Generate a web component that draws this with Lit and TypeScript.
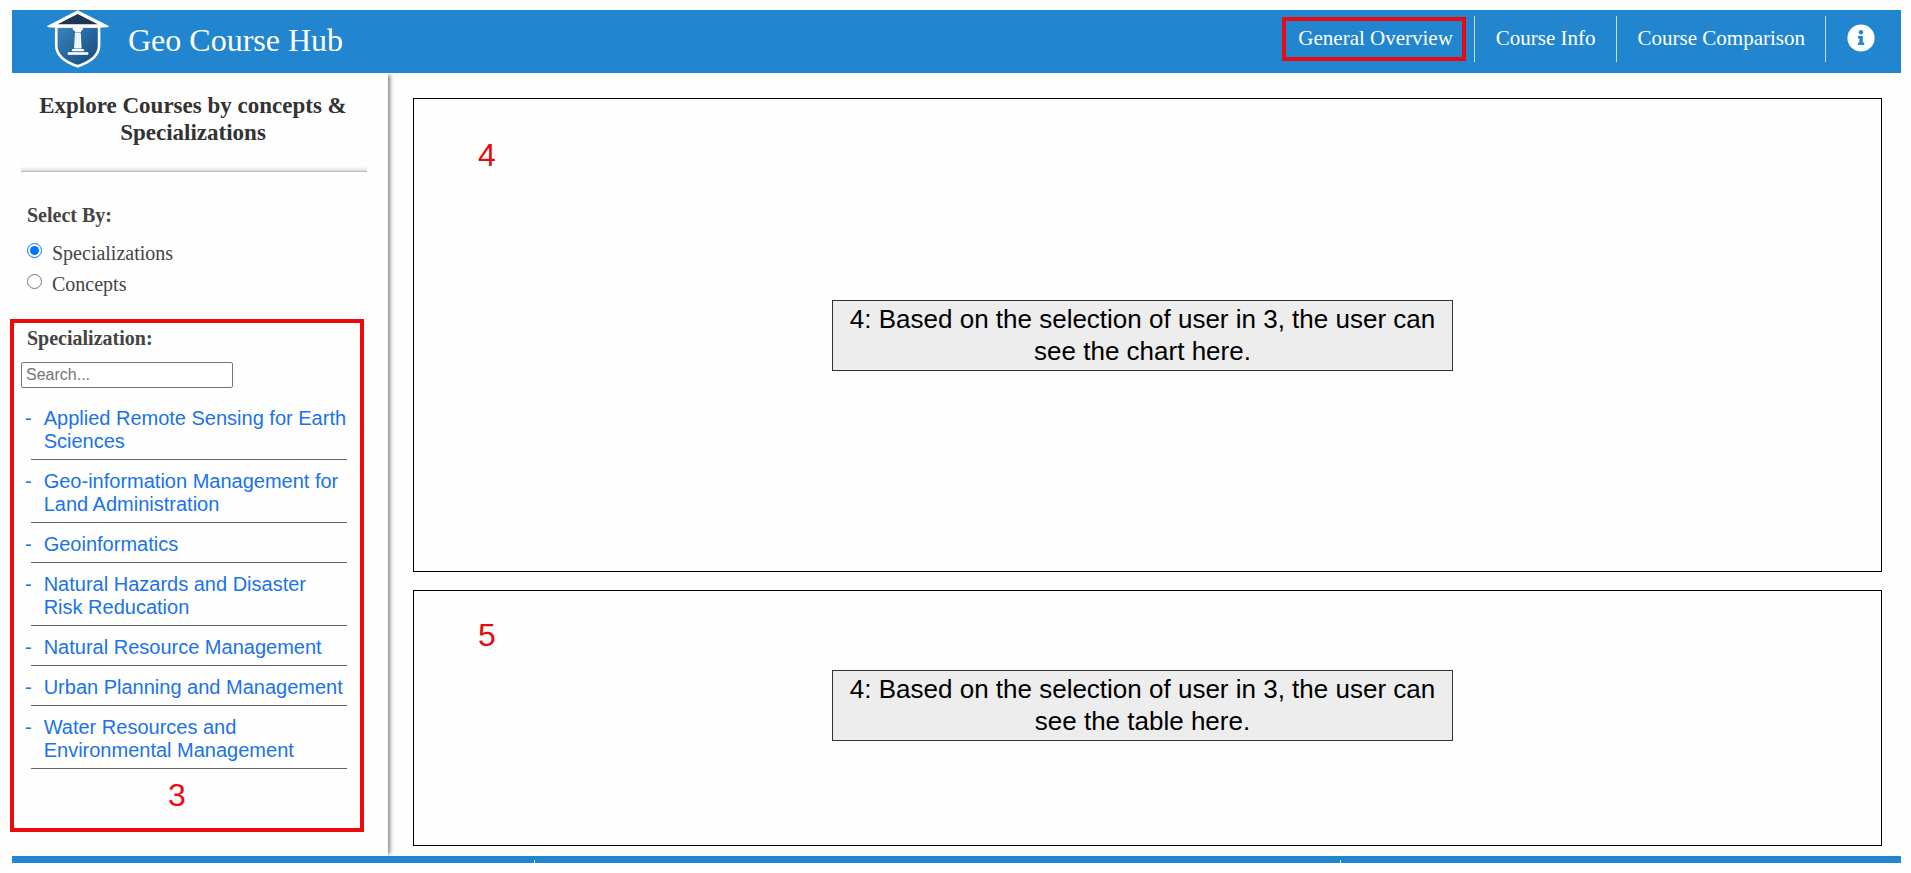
import { LitElement, html, css } from "lit";
import { customElement, state } from "lit/decorators.js";

const SPECIALIZATIONS = [
  "Applied Remote Sensing for Earth Sciences",
  "Geo-information Management for Land Administration",
  "Geoinformatics",
  "Natural Hazards and Disaster Risk Reducation",
  "Natural Resource Management",
  "Urban Planning and Management",
  "Water Resources and Environmental Management",
];

@customElement("hub-header")
export class HubHeader extends LitElement {
  static styles = css`
    :host {
      display: flex;
      align-items: center;
      justify-content: space-between;
      box-sizing: border-box;
      height: 63px;
      padding-bottom: 5px;
      background: #2185d0;
      color: #fff;
      font-family: "Liberation Serif", "Times New Roman", serif;
    }
    .brand {
      display: flex;
      align-items: center;
      gap: 18px;
      padding-left: 34px;
    }
    .logo {
      display: block;
      width: 64px;
      height: 58px;
    }
    .name {
      margin: 0;
      padding-top: 1px;
      font-size: 32px;
      line-height: 40px;
      font-weight: 400;
    }
    .nav {
      display: flex;
      align-items: center;
      padding-right: 6px;
    }
    .item {
      display: flex;
      align-items: center;
      box-sizing: border-box;
      height: 46px;
      padding: 0 20px 2px 21px;
      border-left: 1px solid #c5dff2;
      font-size: 21px;
      line-height: 24px;
    }
    .item.first {
      height: 44px;
      margin-right: 8px;
      padding: 0 9px 2px 12px;
      border: 4px solid #e60a12;
    }
    .link {
      color: #fff;
      text-decoration: none;
    }
    .info {
      display: block;
      width: 28px;
      height: 28px;
      padding: 0;
      border: 0;
      background: none;
      cursor: pointer;
    }
    .glyph {
      display: block;
      width: 28px;
      height: 28px;
    }
  `;

  render() {
    return html`
      <div class="brand">
        <svg class="logo" viewBox="28 30 192 176" aria-hidden="true">
          <defs>
            <linearGradient id="shield" x1="0" y1="0" x2="1" y2="1">
              <stop offset="0" stop-color="#3f86bd" />
              <stop offset="0.5" stop-color="#24659c" />
              <stop offset="1" stop-color="#174a78" />
            </linearGradient>
          </defs>
          <path
            d="M58 80 V138 C58 170 84 188 123 201 C162 188 188 170 188 138 V80 Z"
            fill="url(#shield)"
            stroke="#fff"
            stroke-width="8"
          />
          <path d="M123 31 L219 79 Q214 83 206 83 H42 Q34 83 29 79 Z" fill="#fff" />
          <path d="M123 42 L184 73 H62 Z" fill="#1d3557" />
          <g fill="#fff">
            <path d="M108 84 H139 Q140 92 133 94 V97 H115 V94 Q107 92 108 84 Z" />
            <path d="M115 98 H132 L135 147 H112 Z" />
            <rect x="105" y="148" width="38" height="7" rx="3" />
            <rect x="93" y="158" width="62" height="8" />
          </g>
          <path d="M120 99 L118 146 M127 99 V146" stroke="#b9d0e3" stroke-width="1.5" fill="none" />
        </svg>
        <h1 class="name">Geo Course Hub</h1>
      </div>
      <nav class="nav">
        <div class="item first"><a class="link" href="#overview">General Overview</a></div>
        <div class="item"><a class="link" href="#info">Course Info</a></div>
        <div class="item"><a class="link" href="#comparison">Course Comparison</a></div>
        <div class="item">
          <button class="info" type="button" aria-label="About">
            <svg class="glyph" viewBox="0 0 28 28" aria-hidden="true">
              <circle cx="14" cy="14" r="13.6" fill="#fff" />
              <circle cx="14" cy="8.3" r="2.2" fill="#2185d0" />
              <path d="M11 12 H15.8 V18.6 H17.2 V21 H11 V18.6 H12.4 V14.4 H11 Z" fill="#2185d0" />
            </svg>
          </button>
        </div>
      </nav>
    `;
  }
}

@customElement("hub-sidebar")
export class HubSidebar extends LitElement {
  static styles = css`
    :host {
      display: block;
      box-sizing: border-box;
      width: 376px;
      padding: 12px 0 23px;
      background: #fefefe;
      box-shadow: 4px 0 4px -2px rgba(0, 0, 0, 0.5);
      color: #444;
      font-family: "Liberation Serif", "Times New Roman", serif;
      font-size: 20px;
      line-height: 24px;
    }
    .title {
      box-sizing: border-box;
      margin: 0 21px 0 9px;
      padding: 7px 14px 25px 12px;
      border-bottom: 1px solid #bbb;
      box-shadow: inset 0 -4px 4px -3px rgba(0, 0, 0, 0.2);
      color: #333;
      font-size: 23px;
      line-height: 27px;
      text-align: center;
    }
    .group {
      padding: 31px 0 0 15px;
    }
    .legend {
      display: block;
      font-weight: 700;
    }
    .choices {
      display: grid;
      gap: 7px;
      padding-top: 14px;
    }
    .choice {
      display: flex;
      align-items: flex-start;
      gap: 10px;
    }
    .radio {
      width: 15px;
      height: 15px;
      margin: 2px 0 0;
      accent-color: #0075ff;
    }
    .specs {
      margin: 23px 24px 0 -2px;
      padding: 3px 13px 8px 7px;
      border: 4px solid #ee0a0a;
    }
    .label {
      display: block;
      padding-left: 6px;
      font-weight: 700;
    }
    .search {
      display: block;
      box-sizing: border-box;
      width: 212px;
      height: 26px;
      margin: 12px 0 9px;
      padding: 1px 4px;
      border: 1px solid #767676;
      border-radius: 2px;
      background: #fff;
      font-family: "Liberation Sans", Arial, sans-serif;
      font-size: 16px;
    }
    .search::placeholder {
      color: #757575;
    }
    .list {
      margin: 0;
      padding: 0 0 0 10px;
      list-style: none;
      font-family: "Liberation Sans", Arial, sans-serif;
      line-height: 23px;
    }
    .entry {
      padding: 10px 0 6px;
      border-bottom: 1px solid #666;
    }
    .spec {
      display: flex;
      gap: 12px;
      margin: 0 -1px 0 -6px;
      color: #1a73e8;
      text-decoration: none;
    }
    .number {
      margin: 8px 0 0;
      padding: 0 14px 7px 0;
      color: #ee0a0a;
      font-family: "Liberation Sans", Arial, sans-serif;
      font-size: 32px;
      line-height: 36px;
      text-align: center;
    }
  `;

  @state() private mode = "specializations";

  private choice(value: string, text: string) {
    return html`
      <label class="choice">
        <input
          class="radio"
          type="radio"
          name="mode"
          .checked=${this.mode === value}
          @change=${() => (this.mode = value)}
        />
        <span>${text}</span>
      </label>
    `;
  }

  render() {
    return html`
      <h2 class="title">Explore Courses by concepts &amp; Specializations</h2>
      <div class="group" role="radiogroup" aria-labelledby="by">
        <span class="legend" id="by">Select By:</span>
        <div class="choices">
          ${this.choice("specializations", "Specializations")}
          ${this.choice("concepts", "Concepts")}
        </div>
      </div>
      <section class="specs">
        <label class="label" for="search">Specialization:</label>
        <input class="search" id="search" type="text" placeholder="Search..." />
        <ul class="list">
          ${SPECIALIZATIONS.map(
            (name) => html`
              <li class="entry">
                <a class="spec" href="#spec"><span>-</span><span>${name}</span></a>
              </li>
            `
          )}
        </ul>
        <p class="number">3</p>
      </section>
    `;
  }
}

@customElement("app-root")
export class AppRoot extends LitElement {
  static styles = css`
    :host {
      display: flex;
      flex-direction: column;
      box-sizing: border-box;
      min-height: 100vh;
      padding: 10px 10px 10px 12px;
      background: #fefefe;
      font-family: "Liberation Sans", Arial, sans-serif;
    }
    .header,
    .footer {
      position: relative;
      z-index: 1;
    }
    .body {
      display: flex;
      flex: 1;
    }
    .side {
      flex: none;
    }
    .main {
      display: grid;
      flex: 1;
      grid-template-rows: 475fr 256fr;
      gap: 18px;
      min-width: 0;
      padding: 25px 19px 10px 25px;
    }
    .panel {
      position: relative;
      display: flex;
      align-items: center;
      justify-content: center;
      box-sizing: border-box;
      border: 1px solid #000;
      padding-right: 10px;
    }
    .panel.table {
      padding-bottom: 26px;
    }
    .number {
      position: absolute;
      top: 38px;
      left: 64px;
      margin: 0;
      color: #e60a0a;
      font-size: 32px;
      line-height: 36px;
    }
    .table .number {
      top: 26px;
    }
    .note {
      box-sizing: border-box;
      width: 621px;
      max-width: 90%;
      margin: 0;
      padding: 2px 14px 3px;
      border: 1px solid #333;
      background: #ededed;
      color: #000;
      font-size: 26px;
      line-height: 32px;
      text-align: center;
    }
    .footer {
      display: grid;
      grid-template-columns: 522fr 806fr 561fr;
      height: 7px;
      padding-top: 4px;
      box-sizing: border-box;
      background: #2185d0;
    }
    .cell + .cell {
      border-left: 1px solid #e4f0f9;
    }
  `;

  render() {
    return html`
      <hub-header class="header"></hub-header>
      <div class="body">
        <hub-sidebar class="side"></hub-sidebar>
        <main class="main">
          <section class="panel">
            <p class="number">4</p>
            <p class="note">4: Based on the selection of user in 3, the user can see the chart here.</p>
          </section>
          <section class="panel table">
            <p class="number">5</p>
            <p class="note">4: Based on the selection of user in 3, the user can see the table here.</p>
          </section>
        </main>
      </div>
      <footer class="footer">
        <div class="cell"></div>
        <div class="cell"></div>
        <div class="cell"></div>
      </footer>
    `;
  }
}
